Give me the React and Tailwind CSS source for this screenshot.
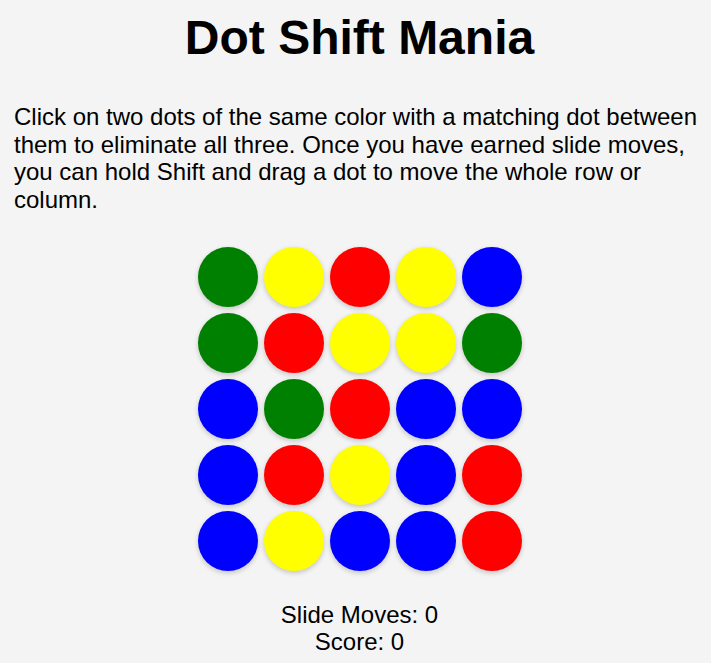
const COLORS = {
  g: "bg-[#008000]",
  y: "bg-[#ffff00]",
  r: "bg-[#ff0000]",
  b: "bg-[#0000ff]",
};

const BOARD = [
  ["g", "y", "r", "y", "b"],
  ["g", "r", "y", "y", "g"],
  ["b", "g", "r", "b", "b"],
  ["b", "r", "y", "b", "r"],
  ["b", "y", "b", "b", "r"],
];

export default function App() {
  return (
    <div className="min-h-screen bg-[#f4f4f4] text-black font-['Liberation_Sans',Arial,sans-serif] pl-[14px] pr-[6px]">
      <h1 className="text-center text-[48px] font-bold leading-[1.15] pt-[10px]">Dot Shift Mania</h1>
      <p className="text-[24px] leading-[1.15] mt-[38px]">
        Click on two dots of the same color with a matching dot between them to eliminate all three. Once you have earned slide moves, you can hold Shift and drag a dot to move the whole row or column.
      </p>
      <div className="flex justify-center mt-[33px]">
        <div className="grid grid-cols-5 gap-[6px]">
          {BOARD.flat().map((c, i) => (
            <div key={i} className={`w-[60px] h-[60px] rounded-full shadow-[0_2px_5px_rgba(0,0,0,0.2)] cursor-pointer ${COLORS[c]}`} />
          ))}
        </div>
      </div>
      <div className="text-center text-[24px] leading-[1.15] mt-[30px]">
        <div>Slide Moves: 0</div>
        <div>Score: 0</div>
      </div>
    </div>
  );
}
